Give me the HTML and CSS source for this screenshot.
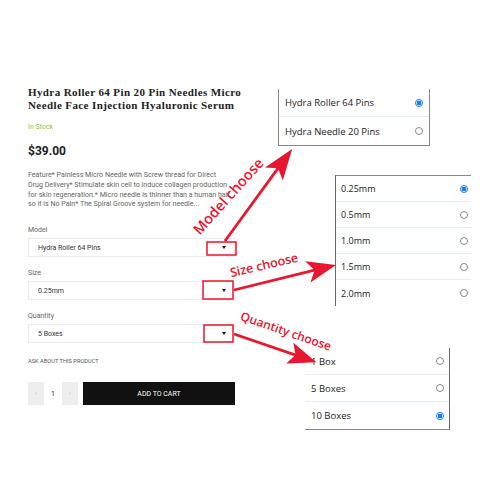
FILE: index.html
```html
<!DOCTYPE html>
<html>
    <head>
        <title>Hydra Roller</title>
        <link rel="stylesheet" href="styles.css">
    </head>
    <body>
        <div class="page">
            <div class="product">
                <h1 class="title">Hydra Roller 64 Pin 20 Pin Needles Micro<br>Needle Face Injection Hyaluronic Serum</h1>
                <p class="stock">In Stock</p>
                <p class="price">$39.00</p>
                <p class="desc">Feature* Painless Micro Needle with Screw thread for Direct<br>Drug Delivery* Stimulate skin cell to induce collagen production<br>for skin regeneration.* Micro needle is thinner than a human hair<br>so it is No Pain* The Spiral Groove system for needle...</p>

                <div class="field">
                    <div class="label">Model</div>
                    <div class="select"><span>Hydra Roller 64 Pins</span><i class="caret"></i></div>
                </div>
                <div class="field">
                    <div class="label">Size</div>
                    <div class="select"><span>0.25mm</span><i class="caret"></i></div>
                </div>
                <div class="field">
                    <div class="label">Quantity</div>
                    <div class="select"><span>5 Boxes</span><i class="caret"></i></div>
                </div>

                <p class="ask">ASK ABOUT THIS PRODUCT</p>

                <div class="buy">
                    <div class="qty">
                        <span class="step">&lsaquo;</span>
                        <span class="num">1</span>
                        <span class="step">&rsaquo;</span>
                    </div>
                    <div class="cart">ADD TO CART</div>
                </div>
            </div>

            <!-- option lists pasted next to the form -->
            <div class="pick pick-model">
                <div class="opt"><span>Hydra Roller 64 Pins</span><i class="radio on"></i></div>
                <div class="opt"><span>Hydra Needle 20 Pins</span><i class="radio"></i></div>
            </div>
            <div class="pick pick-size">
                <div class="opt"><span>0.25mm</span><i class="radio on"></i></div>
                <div class="opt"><span>0.5mm</span><i class="radio"></i></div>
                <div class="opt"><span>1.0mm</span><i class="radio"></i></div>
                <div class="opt"><span>1.5mm</span><i class="radio"></i></div>
                <div class="opt"><span>2.0mm</span><i class="radio"></i></div>
            </div>
            <div class="pick pick-qty">
                <div class="opt"><span>1 Box</span><i class="radio"></i></div>
                <div class="opt"><span>5 Boxes</span><i class="radio"></i></div>
                <div class="opt"><span>10 Boxes</span><i class="radio on"></i></div>
            </div>

            <!-- red notes -->
            <svg class="notes" width="480" height="480" viewBox="0 0 480 480">
                <rect x="207" y="242" width="29" height="13"/>
                <rect x="203" y="281" width="30" height="18"/>
                <rect x="204" y="325" width="29" height="17"/>

                <g transform="translate(225 241) rotate(-53.9)">
                    <line x1="0" y1="0" x2="92" y2="0"/>
                    <polygon points="114,0 83,-11 90,0 83,11"/>
                </g>
                <g transform="translate(234 290) rotate(-13.8)">
                    <line x1="0" y1="0" x2="84" y2="0"/>
                    <polygon points="105,0 76,-11 83,0 76,11"/>
                </g>
                <g transform="translate(234 334) rotate(18.9)">
                    <line x1="0" y1="0" x2="66" y2="0"/>
                    <polygon points="87,0 59,-11 65,0 59,11"/>
                </g>

                <text class="note" transform="translate(228 196) rotate(-48)" font-size="14.5">Model choose</text>
                <text class="note" transform="translate(264 265) rotate(-13)" font-size="12.5">Size choose</text>
                <text class="note" transform="translate(286 331) rotate(19)" font-size="12">Quantity choose</text>
            </svg>
        </div>
    </body>
</html>
```

FILE: styles.css
```css
html, body{
    margin: 0;
    background: #fff;
}
.page{
    position: relative;
    width: 480px;
    height: 480px;
    overflow: hidden;
    font-family: Roboto, "Liberation Sans", sans-serif;
}
.product{
    width: 207px;
    padding: 86px 0 0 28px;
}
.title{
    margin: 0;
    font-family: "Liberation Serif", serif;
    font-weight: bold;
    font-size: 11px;
    line-height: 13px;
    letter-spacing: 0.4px;
    white-space: nowrap;
    color: #222;
}
.stock{
    margin: 10px 0 0;
    font-size: 7px;
    line-height: 10px;
    color: #8dc63f;
}
.price{
    margin: 11px 0 0;
    font-size: 12px;
    line-height: 16px;
    font-weight: bold;
    color: #222;
}
.desc{
    margin: 11px 0 0;
    font-size: 7.1px;
    line-height: 9.8px;
    color: #666;
    white-space: nowrap;
}
.field{
    margin-top: 11px;
}
.field:first-of-type{
    margin-top: 16px;
}
.label{
    font-size: 7px;
    line-height: 10px;
    color: #666;
    margin-bottom: 3px;
}
.select{
    height: 17px;
    border: 1px solid #ececec;
    display: flex;
    align-items: center;
    justify-content: space-between;
    padding: 0 8px 0 9px;
    font-size: 7px;
    color: #333;
}
.caret{
    width: 0;
    height: 0;
    border-left: 2.5px solid transparent;
    border-right: 2.5px solid transparent;
    border-top: 3px solid #111;
}
.ask{
    margin: 14px 0 0;
    font-size: 5.7px;
    line-height: 8px;
    color: #555;
}
.buy{
    margin-top: 17px;
    display: flex;
    gap: 5px;
    height: 23px;
}
.qty{
    width: 50px;
    background: #eee;
    display: flex;
    align-items: stretch;
}
.step{
    flex: 1;
    display: flex;
    align-items: center;
    justify-content: center;
    font-size: 7px;
    color: #bbb;
}
.num{
    width: 18px;
    background: #fff;
    display: flex;
    align-items: center;
    justify-content: center;
    font-size: 7px;
    color: #222;
}
.cart{
    flex: 1;
    background: #111;
    color: #fff;
    display: flex;
    align-items: center;
    justify-content: center;
    font-size: 7px;
}

/* option lists */
.pick{
    position: absolute;
    background: #fff;
    font-family: "Open Sans", sans-serif;
    color: #222;
}
.opt{
    display: flex;
    align-items: center;
    justify-content: space-between;
    border-bottom: 1px solid #e6edf5;
    box-sizing: border-box;
}
.opt:last-child{
    border-bottom: none;
}
.pick-model{
    left: 278px;
    top: 89px;
    width: 150px;
    border: 1px solid #8a8a8a;
    border-top: none;
    font-size: 9.5px;
}
.pick-model .opt{
    height: 28px;
    padding: 0 6px 0 6px;
}
.pick-size{
    left: 335px;
    top: 175px;
    width: 135px;
    height: 130px;
    border-top: 1px solid #8a8a8a;
    border-left: 1px solid #6a6a6a;
    font-size: 9px;
}
.pick-size .opt{
    height: 26px;
    padding: 0 3px 0 5px;
}
.pick-qty{
    left: 305px;
    top: 348px;
    width: 144px;
    border-right: 1px solid #6a6a6a;
    border-bottom: 1px solid #8a8a8a;
    font-size: 9.5px;
}
.pick-qty .opt{
    height: 27px;
    padding: 0 5px 0 6px;
}
.radio{
    width: 8px;
    height: 8px;
    border: 1px solid #888;
    border-radius: 50%;
    box-sizing: border-box;
}
.radio.on{
    border-color: #1a7ff0;
    background: radial-gradient(circle, #1a7ff0 0 2.2px, #fff 2.6px);
}

/* red notes */
.notes{
    position: absolute;
    left: 0;
    top: 0;
    pointer-events: none;
}
.notes rect{
    fill: none;
    stroke: #e8162e;
    stroke-width: 1.5;
}
.notes line{
    stroke: #e8162e;
    stroke-width: 2.8;
}
.notes polygon{
    fill: #e8162e;
}
.note{
    fill: #e8162e;
    font-family: "Open Sans", sans-serif;
    font-weight: 600;
    text-anchor: middle;
    dominant-baseline: central;
}
```
